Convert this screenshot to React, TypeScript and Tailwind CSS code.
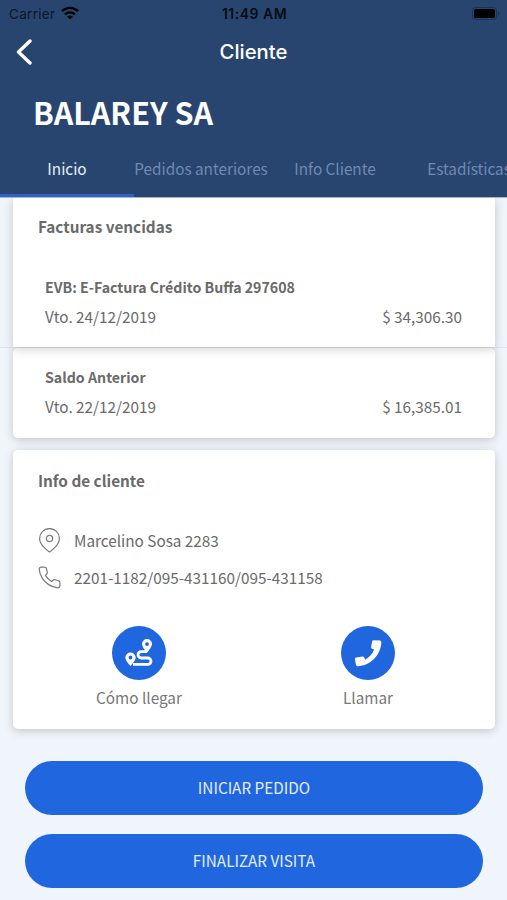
import type { ReactNode } from 'react';

const tabs = ['Inicio', 'Pedidos anteriores', 'Info Cliente', 'Estadísticas'];

const invoices = [
    { title: 'EVB: E-Factura Crédito Buffa 297608', due: 'Vto. 24/12/2019', amount: '$ 34,306.30' },
    { title: 'Saldo Anterior', due: 'Vto. 22/12/2019', amount: '$ 16,385.01' },
];

const StatusBar = () => (
    <div className="h-7 flex items-center justify-between pl-[9px] pr-[7px] text-black/70 font-['Inter',sans-serif]">
        <div className="flex-1 flex items-center gap-[6px] text-[13.5px] tracking-[0.3px]">
            Carrier
            <svg className="w-[18px] h-[14px] -mt-[2px] text-black" viewBox="0 0 18 14" fill="none" stroke="currentColor" strokeWidth="2.4">
                <path d="M1 5.2a11.4 11.4 0 0 1 16 0" />
                <path d="M4 8.4a7.2 7.2 0 0 1 10 0" />
                <path d="M9 13.6 6.2 10.8a4 4 0 0 1 5.6 0z" fill="currentColor" stroke="none" />
            </svg>
        </div>
        <span className="pb-px text-[14px] font-semibold tracking-[0.5px] text-black/85">11:49 AM</span>
        <div className="flex-1 flex justify-end">
            <svg className="w-[28px] h-[13px] -mt-[2px]" viewBox="0 0 28 13">
                <rect x="0.5" y="0.5" width="24" height="12" rx="3" fill="none" stroke="#1b3257" />
                <rect x="2" y="2" width="21" height="9" rx="1.5" fill="#000" />
                <path d="M26 4.5c1.6.6 1.6 3.4 0 4z" fill="#1b3257" />
            </svg>
        </div>
    </div>
);

const RouteIcon = () => (
    <svg className="w-7 h-7" viewBox="0 0 28 28" fill="none">
        <path d="M22 12.6H16.2a3.200 3.200 0 0 0 0 6.400h6.600a3.200 3.200 0 0 1 0 6.400H8" stroke="#fff" strokeWidth="2.800" />
        <path
            fill="#fff"
            fillRule="evenodd"
            d="M22 0a5 5 0 0 1 5 5c0 2.800-3.400 6.800-5 8.800-1.600-2-5-6-5-8.800a5 5 0 0 1 5-5zm0 3.200a1.900 1.900 0 1 0 0 3.800 1.900 1.900 0 0 0 0-3.800z"
        />
        <path
            fill="#fff"
            fillRule="evenodd"
            d="M5.500 13.400a5.200 5.200 0 0 1 5.200 5.100c0 2.900-3.500 6.600-5.200 8.500-1.700-1.900-5.200-5.600-5.200-8.500a5.200 5.200 0 0 1 5.200-5.100zm0 3.200a1.900 1.900 0 1 0 0 3.800 1.900 1.900 0 0 0 0-3.800z"
        />
    </svg>
);

const HandsetIcon = () => (
    <svg className="w-7 h-7" viewBox="0 0 28 28" fill="#fff">
        <path d="M19.600 1.200 25.800 1.400q1.500.1 1.500 1.600C27.200 15 17 27 3.400 27.200q-1.400 0-1.500-1.400L.9 20.200q-.1-1.300 1.100-1.600l6.700-1.100q1.200-.1 1.600 1l.9 2.300C15 18.600 18.400 15 20.100 10.600l-2.100-.9q-1.100-.5-.9-1.700l1-5.500q.3-1.300 1.500-1.300z" />
    </svg>
);

const InfoRow = ({ icon, children }: { icon: ReactNode; children: ReactNode }) => (
    <div className="h-[37px] flex items-center gap-3">
        <svg className="w-[25px] h-[25px] -mt-px text-[#7d7d7d]" viewBox="0 0 24 24" fill="none" stroke="currentColor" strokeWidth="1.2" strokeLinecap="round" strokeLinejoin="round">
            {icon}
        </svg>
        <span className="pb-px">{children}</span>
    </div>
);

const RoundAction = ({ icon, label }: { icon: ReactNode; label: string }) => (
    <button className="flex-1 flex flex-col items-center">
        <span className="w-[54px] h-[54px] rounded-full bg-[#2066df] text-white flex items-center justify-center">{icon}</span>
        <span className="mt-[6px] pl-px leading-[22px] text-[#777]">{label}</span>
    </button>
);

export default function App() {
    return (
        <div className="w-[507px] h-[900px] overflow-hidden bg-[#f0f4fb] text-[15.3px] text-[#6a6a6a] font-['Noto_Sans_CJK_SC',sans-serif]">
            <header className="relative z-10 h-[198px] flex flex-col bg-[#28456f] border-b border-[#a9b5cb]">
                <StatusBar />
                <div className="h-[49px] flex items-center px-4">
                    <div className="flex-1">
                        <svg className="w-4 h-[26px] -mt-[2px]" viewBox="0 0 16 26" fill="none" stroke="#fff" strokeWidth="3.4" strokeLinecap="round" strokeLinejoin="round">
                            <path d="M14 2 2.500 13 14 24" />
                        </svg>
                    </div>
                    <h1 className="pb-px text-[20.3px] font-medium text-white font-['Inter',sans-serif]">Cliente</h1>
                    <div className="flex-1" />
                </div>
                <h2 className="h-[73px] pl-[33px] leading-[70px] text-[30.5px] font-bold text-white">BALAREY SA</h2>
                <nav className="flex-1 flex">
                    {tabs.map((tab, i) => (
                        <div
                            key={tab}
                            className={`w-[134px] h-full shrink-0 pb-[2px] pt-[6px] text-center leading-[24px] whitespace-nowrap border-b-3 ${i === 0 ? 'text-[#e6eefa] border-[#2f61c8]' : 'text-[#7189b3] border-transparent'}`}
                        >
                            {tab}
                        </div>
                    ))}
                </nav>
            </header>

            <main>
                {invoices.map((invoice, i) => (
                    <div key={invoice.title} className={`pl-[13px] pr-3 ${i === 0 ? 'relative border-b border-[#dfe3ea]' : ''}`}>
                        <section
                            className={`bg-white pl-8 pr-[33px] shadow-[0_2px_10px_rgba(0,0,0,0.19)] ${i === 0 ? 'h-[149px] pt-4' : 'h-[90px] pt-[17px] rounded-[5px]'}`}
                        >
                            {i === 0 && <h3 className="-ml-[7px] mb-[37px] leading-6 font-bold">Facturas vencidas</h3>}
                            <h4 className="leading-6 text-[14.2px] font-bold">{invoice.title}</h4>
                            <div className="mt-[5px] flex justify-between leading-6">
                                <span>{invoice.due}</span>
                                <span>{invoice.amount}</span>
                            </div>
                        </section>
                    </div>
                ))}

                <section className="relative ml-[13px] mr-3 mt-3 h-[279px] pt-[18px] bg-white rounded-[5px] shadow-[0_2px_10px_rgba(0,0,0,0.19)]">
                    <h3 className="pl-[25px] leading-6 font-bold">Info de cliente</h3>
                    <div className="mt-[30px] pl-6">
                        <InfoRow
                            icon={
                                <>
                                    <path d="M21.500 10c0 7-9.500 13-9.500 13s-9.500-6-9.500-13a9.500 9.500 0 0 1 19 0z" />
                                    <circle cx="12" cy="10" r="3" />
                                </>
                            }
                        >
                            Marcelino Sosa 2283
                        </InfoRow>
                        <InfoRow
                            icon={
                                <path d="M22 16.920v3a2 2 0 0 1-2.180 2 19.790 19.790 0 0 1-8.630-3.070 19.500 19.500 0 0 1-6-6 19.790 19.790 0 0 1-3.070-8.670A2 2 0 0 1 4.110 2h3a2 2 0 0 1 2 1.720 12.840 12.840 0 0 0 .7 2.810 2 2 0 0 1-.45 2.110L8.090 9.910a16 16 0 0 0 6 6l1.270-1.270a2 2 0 0 1 2.110-.45 12.840 12.840 0 0 0 2.810.7A2 2 0 0 1 22 16.920z" />
                            }
                        >
                            2201-1182/095-431160/095-431158
                        </InfoRow>
                    </div>
                    <div className="mt-[30px] pl-[11px] pr-[13px] flex">
                        <RoundAction icon={<RouteIcon />} label="Cómo llegar" />
                        <RoundAction icon={<HandsetIcon />} label="Llamar" />
                    </div>
                </section>

                <div className="mt-8 pl-[25px] pr-6 flex flex-col gap-[19px]">
                    <button className="h-[54px] pb-[2px] rounded-full bg-[#2066df] text-[#e3eefc]">INICIAR PEDIDO</button>
                    <button className="h-[54px] pb-[2px] rounded-full bg-[#2066df] text-[#e3eefc]">FINALIZAR VISITA</button>
                </div>
            </main>
        </div>
    );
}
